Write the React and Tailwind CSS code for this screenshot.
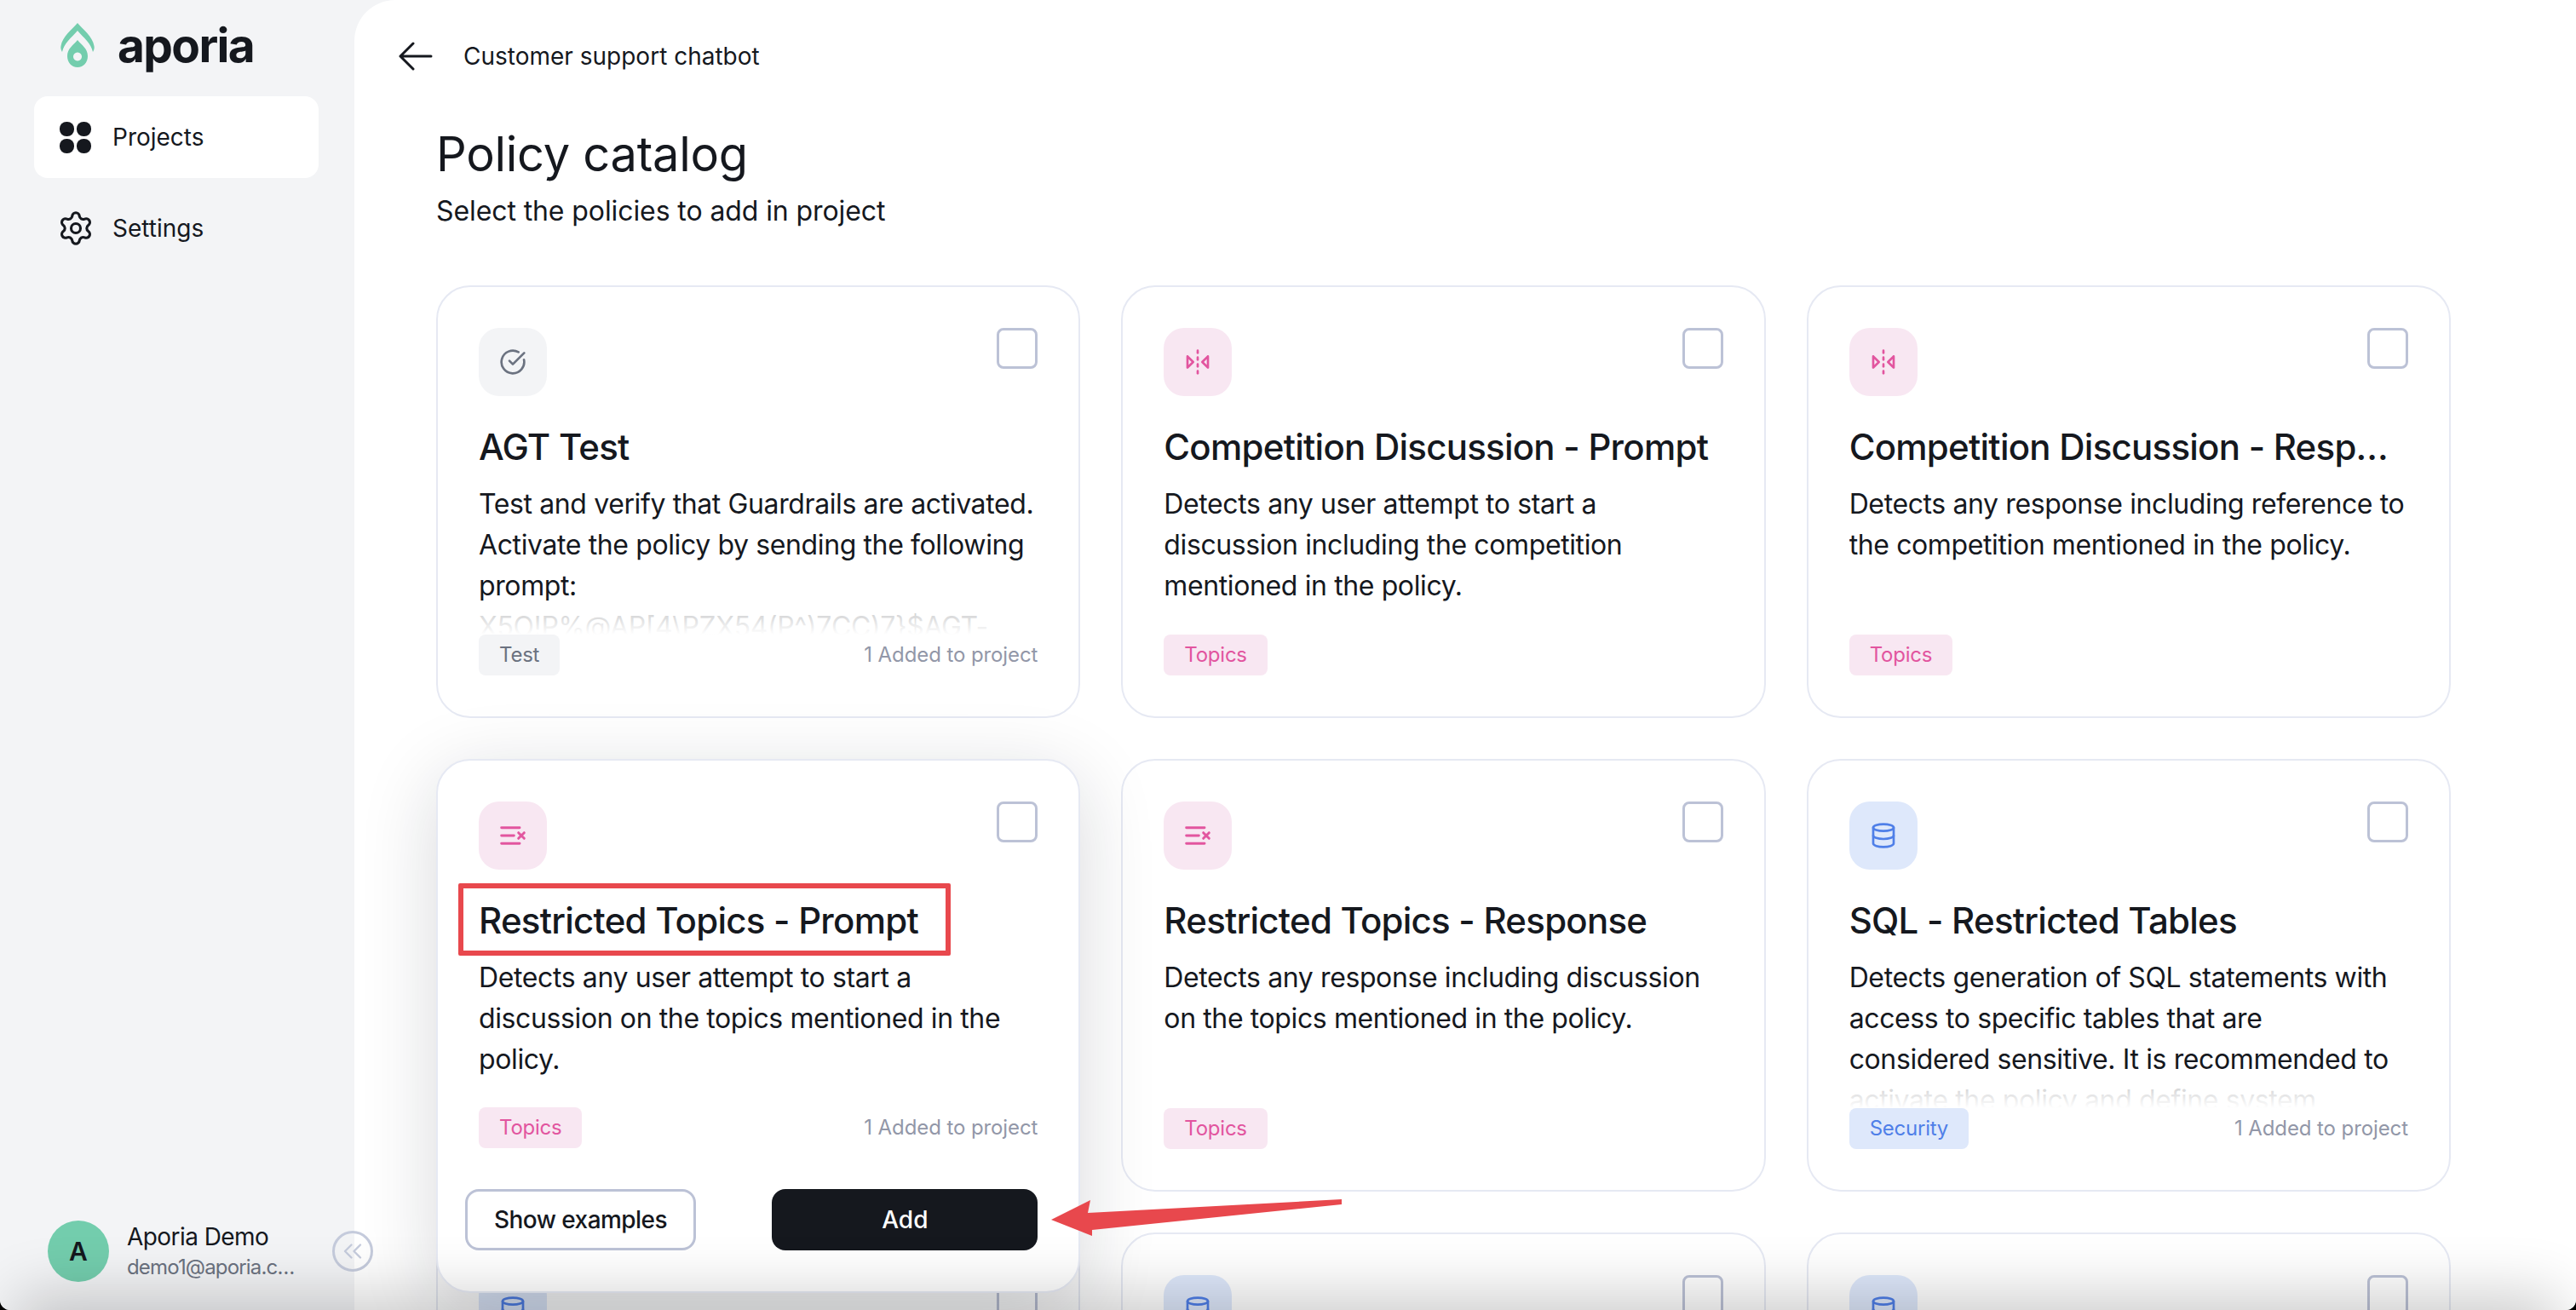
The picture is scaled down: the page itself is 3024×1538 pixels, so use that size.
import React from "react";
import { Settings, Database, ChevronsLeft, CircleCheckBig, FlipHorizontal2 } from "lucide-react";

const PINK = { box: "bg-[#f8e7f2] text-[#e2559f]", tag: "Topics" };
const BLUE = { box: "bg-[#deE8fb] text-[#4f7fe8]", tag: "Security" };
const GRAY = { box: "bg-[#f3f4f6] text-[#6b7280]", tag: "Test" };

function ListCross({ className }) {
    return (
        <svg viewBox="0 0 24 24" fill="none" stroke="currentColor" strokeWidth="2.2" strokeLinecap="round" className={className}>
            <path d="M2 5h16M2 12h11M2 19h16" />
            <path d="M17 9.5l5 5M22 9.5l-5 5" />
        </svg>
    );
}

const policies = [
    {
        title: "AGT Test",
        desc: (
            <>
                Test and verify that Guardrails are activated. Activate the policy by sending the following prompt:{" "}
                <span className="block">X5O!P%@AP[4\PZX54(P^)7CC)7}$AGT-</span>
            </>
        ),
        Icon: CircleCheckBig,
        theme: GRAY,
        added: true,
        fade: true,
    },
    {
        title: "Competition Discussion - Prompt",
        desc: "Detects any user attempt to start a discussion including the competition mentioned in the policy.",
        Icon: FlipHorizontal2,
        theme: PINK,
    },
    {
        title: "Competition Discussion - Response",
        desc: "Detects any response including reference to the competition mentioned in the policy.",
        Icon: FlipHorizontal2,
        theme: PINK,
    },
    {
        title: "Restricted Topics - Prompt",
        desc: "Detects any user attempt to start a discussion on the topics mentioned in the policy.",
        Icon: ListCross,
        theme: PINK,
        added: true,
        hovered: true,
    },
    {
        title: "Restricted Topics - Response",
        desc: "Detects any response including discussion on the topics mentioned in the policy.",
        Icon: ListCross,
        theme: PINK,
    },
    {
        title: "SQL - Restricted Tables",
        desc: "Detects generation of SQL statements with access to specific tables that are considered sensitive. It is recommended to activate the policy and define system",
        Icon: Database,
        theme: BLUE,
        added: true,
        fade: true,
    },
    { title: "SQL - Allowed Tables", desc: "", Icon: Database, theme: BLUE },
    { title: "SQL - Read Only", desc: "", Icon: Database, theme: BLUE },
    { title: "SQL - Load Limit", desc: "", Icon: Database, theme: BLUE },
];

function PolicyCard({ policy }) {
    const { title, desc, Icon, theme, added, fade, hovered } = policy;
    return (
        <div
            className={
                "relative flex flex-col rounded-[40px] border-2 border-[#e6e9f3] bg-white px-[48px] pt-[48px] " +
                (hovered
                    ? "z-10 h-[627px] -mb-[119px] pb-[48px] shadow-[0_20px_90px_rgba(20,24,40,0.16)]"
                    : "h-[508px] pb-[48px]")
            }
        >
            <div className="flex items-start justify-between">
                <div className={"flex h-[80px] w-[80px] items-center justify-center rounded-[24px] " + theme.box}>
                    <Icon className="h-[32px] w-[32px]" strokeWidth={2} />
                </div>
                <div className="h-[48px] w-[48px] rounded-[8px] border-[3px] border-[#bcc2d6] bg-white" />
            </div>
            <h3 className="mt-[32px] truncate text-[42px] leading-[56px] font-medium tracking-[-0.018em] text-[#15181e]">{title}</h3>
            <div className="relative mt-[15px] h-[177px] overflow-hidden text-[32px] leading-[48px] tracking-[-0.012em] text-[#15181e]">
                {desc}
                {fade && <div className="absolute inset-x-0 bottom-0 h-[40px] bg-gradient-to-b from-white/70 to-white" />}
            </div>
            <div className="flex items-center justify-between">
                <span className={"flex h-[48px] items-center rounded-[8px] px-[24px] text-[24px] tracking-[-0.01em] " + theme.box}>{theme.tag}</span>
                {added && <span className="text-[24px] tracking-[-0.004em] text-[#9297a8]">1 Added to project</span>}
            </div>
            {hovered && (
                <div className="-ml-[16px] mt-[48px] flex justify-between">
                    <button className="h-[72px] w-[271px] rounded-[16px] border-[3px] border-[#bcc2d6] bg-white text-[28px] font-medium tracking-[-0.02em] text-[#15181e]">
                        Show examples
                    </button>
                    <button className="h-[72px] w-[312px] rounded-[16px] bg-[#15181e] text-[28px] font-medium text-white">Add</button>
                </div>
            )}
        </div>
    );
}

function Sidebar() {
    return (
        <aside className="flex w-[416px] shrink-0 flex-col bg-[#f3f4f6] px-[40px] pb-[33px] pt-[21px]">
            <div className="flex h-[64px] items-center gap-[27px] pl-[31px]">
                <svg viewBox="0 0 40 52" className="h-[52px] w-[40px]" fill="#73cdad">
                    <path fillRule="evenodd" d="M20 0 C26 7 38 16 39.5 27 C40 29 39.5 32 38 34 C36 24 27 17 20 9 C13 17 4 24 2 34 C0.5 32 0 29 0.5 27 C2 16 14 7 20 0Z" />
                    <path fillRule="evenodd" d="M20 20 C25 26 32 30 32 39 C32 46 27 52 20 52 C13 52 8 46 8 39 C8 30 15 26 20 20Z M20 34.5 a5 5 0 1 0 0.01 0Z" />
                </svg>
                <span className="text-[55px] leading-none font-bold tracking-[-0.03em] text-[#15181e]">aporia</span>
            </div>
            <div className="mt-[28px] flex h-[96px] w-[334px] items-center gap-[25px] rounded-[16px] bg-white pl-[30px]">
                <div className="grid w-[37px] grid-cols-2 gap-[3px]">
                    <span className="h-[17px] rounded-[8px] bg-[#15181e]" />
                    <span className="h-[17px] rounded-[8px] bg-[#15181e]" />
                    <span className="h-[17px] rounded-[8px] bg-[#15181e]" />
                    <span className="h-[17px] rounded-[8px] bg-[#15181e]" />
                </div>
                <span className="text-[28px] text-[#15181e]">Projects</span>
            </div>
            <div className="mt-[11px] flex h-[96px] items-center gap-[21px] pl-[27px]">
                <Settings className="h-[44px] w-[44px] text-[#15181e]" strokeWidth={1.7} />
                <span className="text-[28px] text-[#15181e]">Settings</span>
            </div>
            <div className="mt-auto flex items-center gap-[21px] pl-[16px]">
                <div className="flex h-[72px] w-[72px] items-center justify-center rounded-full bg-[#73cdad] text-[30px] font-semibold text-[#15181e]">A</div>
                <div className="w-[200px]">
                    <div className="text-[28px] leading-[38px] tracking-[-0.02em] text-[#15181e]">Aporia Demo</div>
                    <div className="truncate text-[24px] leading-[34px] tracking-[-0.035em] text-[#6b7280]">demo1@aporia.com</div>
                </div>
            </div>
        </aside>
    );
}

export default function App() {
    return (
        <div className="h-[1538px] w-[3024px] bg-black">
            <div className="relative flex h-full w-full overflow-hidden rounded-b-[12px] bg-[#f3f4f6] font-['Inter',sans-serif]">
                <Sidebar />
                <main className="min-w-0 flex-1 rounded-tl-[48px] bg-white pl-[96px] pr-[147px] pt-[46px]">
                    <div className="-ml-[44px] flex h-[40px] items-center gap-[36px]">
                        <svg viewBox="0 0 40 34" className="h-[34px] w-[40px] text-[#15181e]" fill="none" stroke="currentColor" strokeWidth="3" strokeLinecap="round" strokeLinejoin="round">
                            <path d="M38 17H2M17 2L2 17l15 15" />
                        </svg>
                        <span className="text-[28px] text-[#15181e]">Customer support chatbot</span>
                    </div>
                    <h1 className="mt-[57px] text-[56px] leading-[76px] tracking-[-0.005em] text-[#15181e]">Policy catalog</h1>
                    <p className="mt-[7px] text-[32px] leading-[44px] tracking-[-0.003em] text-[#15181e]">Select the policies to add in project</p>
                    <div className="mt-[65px] grid grid-cols-3 gap-[48px]">
                        {policies.map((policy) => (
                            <PolicyCard key={policy.title} policy={policy} />
                        ))}
                    </div>
                </main>

                {/* collapse button on the sidebar edge */}
                <button className="absolute left-[390px] top-[1445px] z-20 flex h-[48px] w-[48px] items-center justify-center rounded-full border-[3px] border-[#c5cbdc] text-[#c5cbdc]">
                    <ChevronsLeft className="h-[36px] w-[36px]" strokeWidth={1.6} />
                </button>

                {/* screenshot annotations */}
                <div className="absolute left-[538px] top-[1037px] z-30 h-[85px] w-[578px] rounded-[2px] border-[6px] border-[#e8484d]" />
                <svg className="absolute left-[1230px] top-[1400px] z-30 h-[56px] w-[350px]" viewBox="0 0 350 56" fill="#e8484d">
                    <path d="M4 32 L50 9 L47 24 L345 8 L345 14 L52 44 L52 51 Z" />
                </svg>

                {/* soft shadow at the bottom edge of the capture */}
                <div className="pointer-events-none absolute left-[60px] right-[60px] top-[1560px] z-40 h-[20px] shadow-[0_0_70px_40px_rgba(0,0,0,0.2)]" />
            </div>
        </div>
    );
}
